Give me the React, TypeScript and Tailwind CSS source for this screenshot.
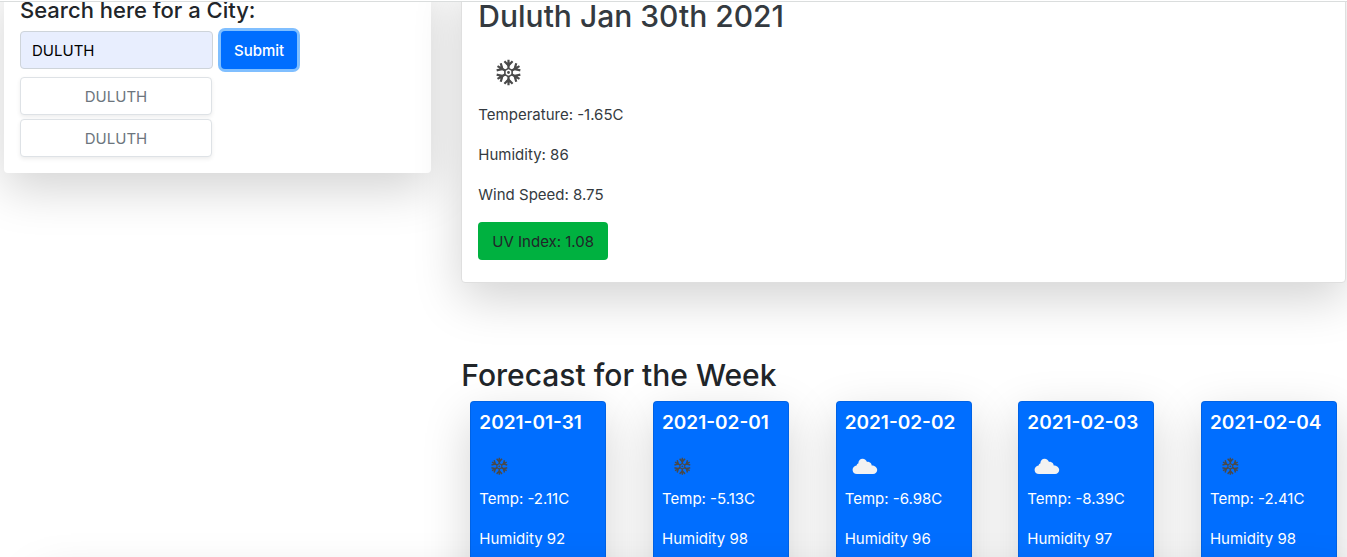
import React, { useState } from "react";

type Sky = "snow" | "cloud";

interface Day {
  date: string;
  sky: Sky;
  temp: string;
  humidity: number;
}

const days: Day[] = [
  { date: "2021-01-31", sky: "snow", temp: "-2.11C", humidity: 92 },
  { date: "2021-02-01", sky: "snow", temp: "-5.13C", humidity: 98 },
  { date: "2021-02-02", sky: "cloud", temp: "-6.98C", humidity: 96 },
  { date: "2021-02-03", sky: "cloud", temp: "-8.39C", humidity: 97 },
  { date: "2021-02-04", sky: "snow", temp: "-2.41C", humidity: 98 },
];

const history = ["DULUTH", "DULUTH"];

function Snowflake({ className }: { className: string }) {
  return (
    <svg viewBox="0 0 60 60" className={className} fill="none" stroke="#4a4a4a" strokeWidth="2.2" aria-hidden="true">
      {[0, 60, 120, 180, 240, 300].map((angle) => (
        <g key={angle} transform={`rotate(${angle} 30.5 30.5)`}>
          <path d="M30.5 17.8V27M26.4 19.2L30.5 23.4L34.6 19.2" />
          <path d="M28.2 21.2L30.5 25L32.8 21.2Z" strokeWidth="0.6" fill="#4a4a4a" />
        </g>
      ))}
      <path d="M30.5 26.4L34.1 28.4V32.6L30.5 34.6L26.9 32.6V28.4Z" strokeWidth="1.6" />
      <circle cx="30.5" cy="30.5" r="1.4" fill="#4a4a4a" stroke="none" />
    </svg>
  );
}

function Cloud({ className }: { className: string }) {
  return (
    <svg viewBox="0 0 40 40" className={className} fill="#f2f2f2" aria-hidden="true">
      <path d="M12 28C9.4 28 7.6 26.2 7.6 23.9C7.6 21.6 9.3 19.9 11.6 19.6C11.6 18.4 12.3 17.6 13.3 17.4C13.4 14.7 15.2 12.7 17.6 12.7C19.7 12.7 21.3 14 22 16.1C22.6 15.8 23.2 15.8 23.8 15.9C25.6 16.2 26.6 17.5 26.7 19.4C29.7 19.4 32.2 21.2 32.2 24C32.2 26.3 30.4 28 28.1 28Z" />
    </svg>
  );
}

function ForecastCard({ day }: { day: Day }) {
  return (
    <article className="min-h-[220px] w-[136px] rounded border border-black/10 bg-[#006eff] p-2 text-white shadow-[0_16px_48px_rgba(0,0,0,0.175)]">
      <h3 className="mb-[10px] whitespace-nowrap text-[19px] font-semibold leading-[26px]">{day.date}</h3>
      {day.sky === "snow" ? <Snowflake className="size-10" /> : <Cloud className="size-10" />}
      <p className="mb-[14px] whitespace-nowrap text-[15px] leading-[26px]">Temp: {day.temp}</p>
      <p className="whitespace-nowrap text-[15px] leading-[26px]">Humidity {day.humidity}</p>
    </article>
  );
}

export default function App() {
  const [city, setCity] = useState("DULUTH");

  return (
    <div className="flex h-screen flex-col overflow-hidden bg-white font-['Inter','Liberation_Sans',sans-serif] text-base text-[#212529]">
      <header className="h-[2px] shrink-0 border-b border-[#dadddd] bg-white" />
      <main className="grow overflow-hidden">
        <div className="-ml-[11px] -mr-[14px] -mt-[23px] flex items-start">
          <section className="w-1/3 px-[15px]">
            <div className="rounded bg-white p-4 shadow-[0_16px_48px_rgba(0,0,0,0.175)]">
              <form onSubmit={(e) => e.preventDefault()}>
                <label htmlFor="city" className="mb-[6px] block text-[22px] font-medium leading-[30px]">
                  Search here for a City:
                </label>
                <div className="mb-2 flex gap-2">
                  <input
                    id="city"
                    value={city}
                    onChange={(e) => setCity(e.target.value)}
                    className="h-[38px] w-[193px] rounded border border-[#ced4da] bg-[#e8eefe] px-[11px] text-[15px] text-black outline-none"
                  />
                  <button
                    type="submit"
                    className="h-[38px] rounded bg-[#006eff] px-[13px] pt-[2px] text-[15px] font-medium text-white shadow-[0_0_0_3px_#80bfff]"
                  >
                    Submit
                  </button>
                </div>
              </form>
              <div className="flex flex-col items-start gap-1">
                {history.map((name, i) => (
                  <button
                    key={i}
                    type="button"
                    onClick={() => setCity(name)}
                    className="h-[38px] w-[192px] rounded border border-[#dee2e6] bg-white pt-[2px] text-[15px] text-[#6c757d] shadow-[0_2px_4px_rgba(0,0,0,0.075)]"
                  >
                    {name}
                  </button>
                ))}
              </div>
            </div>
          </section>

          <section className="w-2/3 px-[15px]">
            <div className="mb-[72px] rounded border border-[#dfdfdf] bg-white px-4 pb-[22px] pt-4 text-[#343a40] shadow-[0_16px_48px_rgba(0,0,0,0.175)]">
              <h2 className="mb-[6px] text-[30px] font-medium leading-10">Duluth Jan 30th 2021</h2>
              <Snowflake className="size-[60px]" />
              <p className="mb-[14px] text-[15px] leading-[26px]">Temperature: -1.65C</p>
              <p className="mb-[14px] text-[15px] leading-[26px]">Humidity: 86</p>
              <p className="mb-[14px] text-[15px] leading-[26px]">Wind Speed: 8.75</p>
              <button type="button" className="h-[38px] rounded bg-[#00b140] px-[14px] pt-[2px] text-[15px] text-[#212529]">
                UV Index: 1.08
              </button>
            </div>

            <h2 className="mb-[6px] text-[30px] font-medium leading-10">Forecast for the Week</h2>
            <div className="flex justify-between px-[9px]">
              {days.map((day) => (
                <ForecastCard key={day.date} day={day} />
              ))}
            </div>
          </section>
        </div>
        <footer className="relative -mt-[54px] ml-10 h-64 shadow-[0_16px_48px_rgba(0,0,0,0.175)]" />
      </main>
    </div>
  );
}
